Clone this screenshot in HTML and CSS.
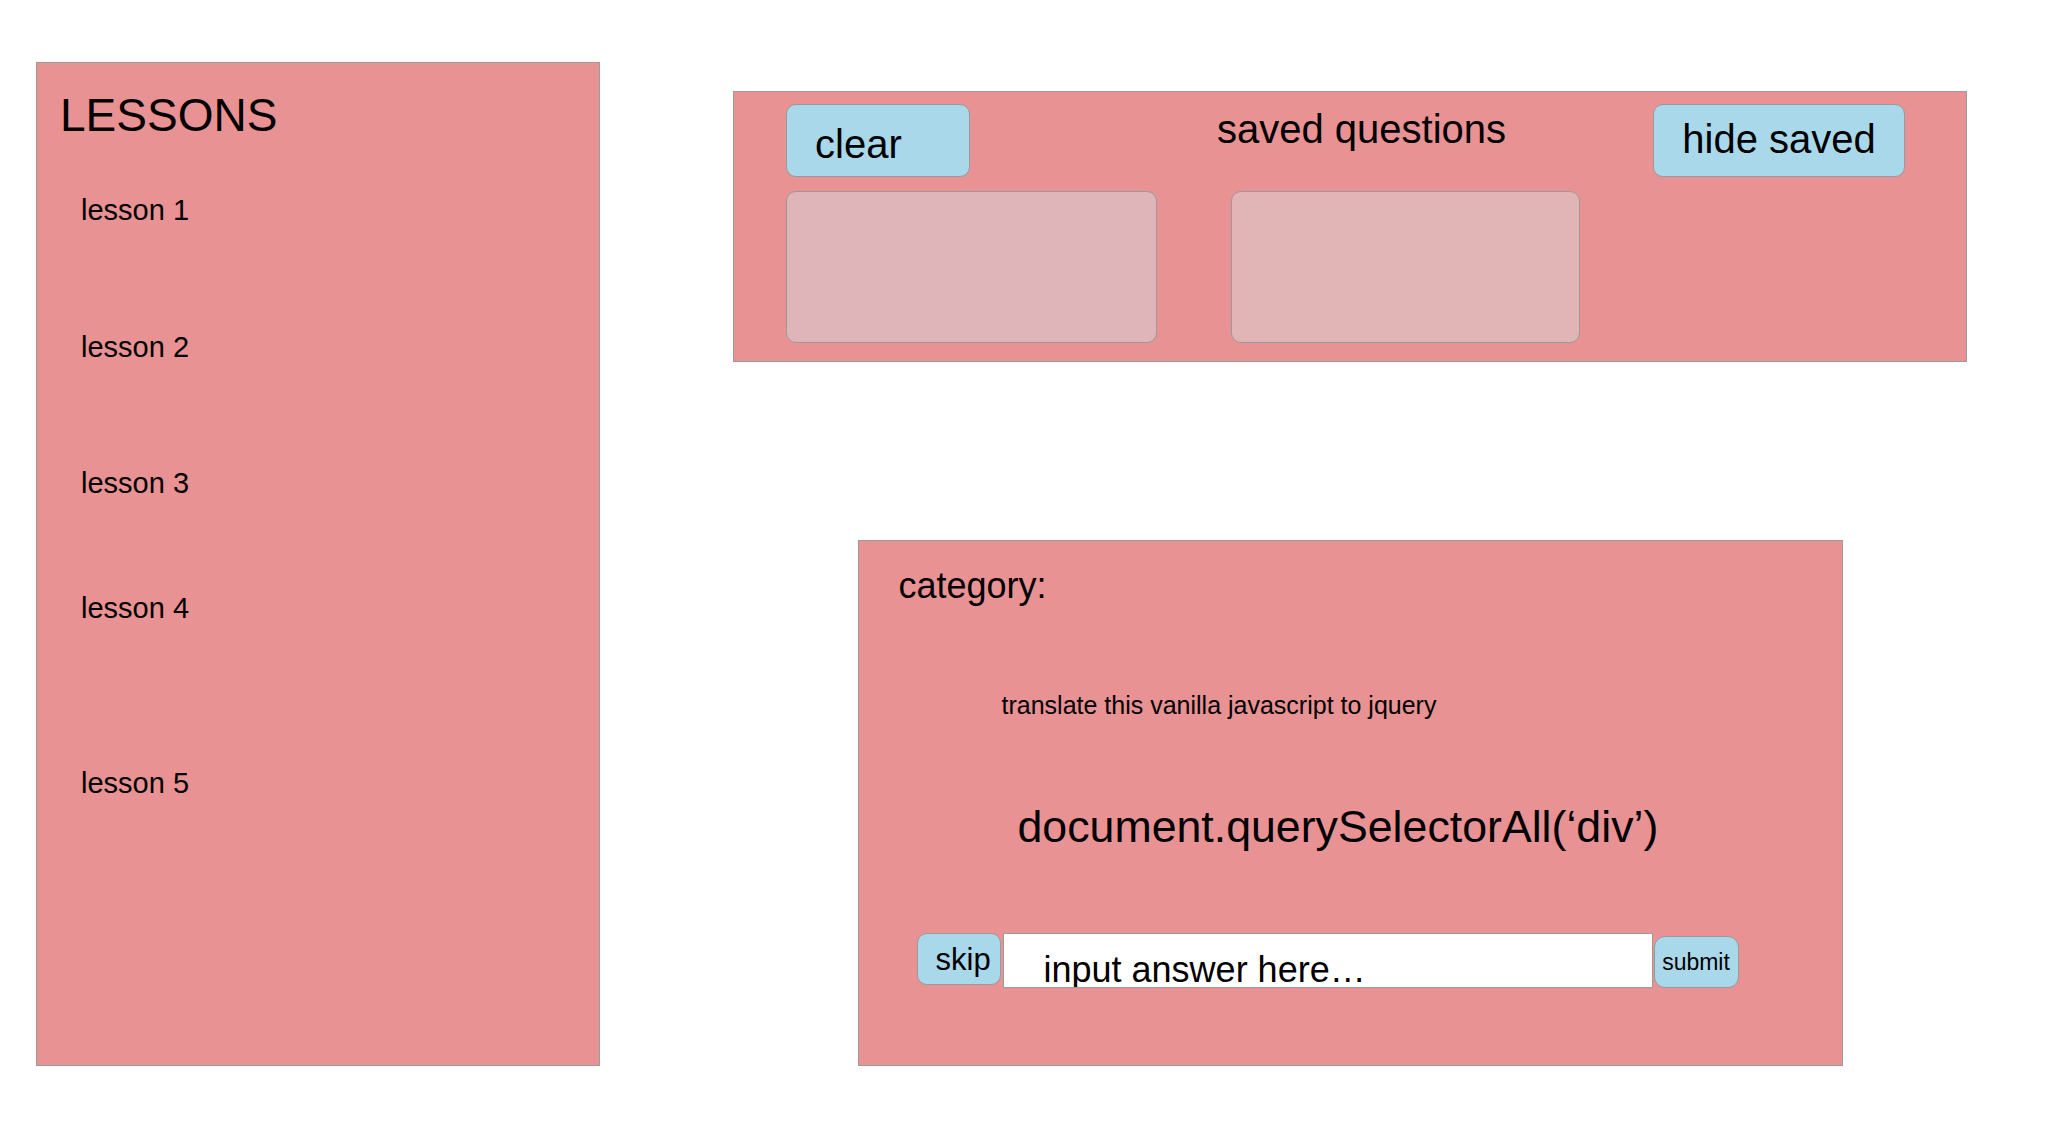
FILE: index.html
```html
<!DOCTYPE html>
<html lang="en">
<head>
<meta charset="utf-8">
<title>Lessons</title>
<link rel="stylesheet" href="styles.css">
</head>
<body>
<div class="page">
  <aside class="lessons">
    <h1 class="lessons-title">LESSONS</h1>
    <ul class="lesson-list">
      <li class="lesson lesson-1">lesson 1</li>
      <li class="lesson lesson-2">lesson 2</li>
      <li class="lesson lesson-3">lesson 3</li>
      <li class="lesson lesson-4">lesson 4</li>
      <li class="lesson lesson-5">lesson 5</li>
    </ul>
  </aside>
  <main class="workspace">
    <section class="saved">
      <div class="saved-head">
        <button type="button" class="btn btn-clear">clear</button>
        <h2 class="saved-title">saved questions</h2>
        <button type="button" class="btn btn-hide">hide saved</button>
      </div>
      <div class="saved-cards">
        <div class="saved-card card-a"></div>
        <div class="saved-card card-b"></div>
      </div>
    </section>
    <section class="quiz">
      <p class="quiz-category">category:</p>
      <p class="quiz-prompt">translate this vanilla javascript to jquery</p>
      <p class="quiz-code">document.querySelectorAll(‘div’)</p>
      <form class="answer-row">
        <button type="button" class="btn btn-skip">skip</button>
        <input class="answer-input" type="text" placeholder="input answer here…">
        <button type="button" class="btn btn-submit">submit</button>
      </form>
    </section>
  </main>
</div>
</body>
</html>
```

FILE: styles.css
```css
html, body {
  margin: 0;
  padding: 0;
  background: #ffffff;
}

body {
  font-family: "Liberation Sans", Arial, Helvetica, sans-serif;
  color: #000000;
}

.page {
  display: flex;
  align-items: flex-start;
  padding: 62px 0 0 36px;
}

/* ---------- lessons sidebar ---------- */
.lessons {
  box-sizing: border-box;
  width: 564px;
  height: 1004px;
  background: #e89294;
  border: 1px solid #9c9c9c;
  padding: 29px 0 0 23px;
}

.lessons-title {
  margin: 0;
  font-size: 46px;
  line-height: 46px;
  font-weight: normal;
}

.lesson-list {
  list-style: none;
  margin: 0;
  padding: 0 0 0 21px;
}

.lesson {
  font-size: 29px;
  line-height: 29px;
}

.lesson-1 { margin-top: 58px; }
.lesson-2 { margin-top: 107.5px; }
.lesson-3 { margin-top: 107.5px; }
.lesson-4 { margin-top: 96px; }
.lesson-5 { margin-top: 146px; }

/* ---------- workspace ---------- */
.workspace {
  margin-left: 133px;
  width: 1234px;
  display: flex;
  flex-direction: column;
  align-items: center;
}

.btn {
  display: block;
  box-sizing: border-box;
  margin: 0;
  font-family: inherit;
  color: #000000;
  background: #a9d8eb;
  border: 1px solid #9a9a9a;
  border-radius: 10px;
  cursor: pointer;
}

/* saved questions panel */
.saved {
  box-sizing: border-box;
  width: 1234px;
  height: 271px;
  margin-top: 29px;
  background: #e89294;
  border: 1px solid #9c9c9c;
  padding: 12px 61px 0 52px;
}

.saved-head {
  display: flex;
  align-items: flex-start;
}

.btn-clear {
  width: 184px;
  padding: 19px 0 12px 28px;
  font-size: 40px;
  line-height: 40px;
  text-align: left;
}

.saved-title {
  margin: 5px 0 0 247px;
  font-size: 40px;
  line-height: 40px;
  font-weight: normal;
}

.btn-hide {
  margin-left: auto;
  width: 252px;
  padding: 14px 0 17px 0;
  font-size: 40px;
  line-height: 40px;
  text-align: center;
}

.saved-cards {
  display: flex;
  gap: 74px;
  margin-top: 14px;
}

.saved-card {
  box-sizing: border-box;
  height: 152px;
  border: 1px solid #9a9a9a;
  border-radius: 10px;
}

.card-a {
  width: 371px;
  background: #e0b5b9;
}

.card-b {
  width: 349px;
  background: #e1b4b5;
}

/* quiz panel */
.quiz {
  box-sizing: border-box;
  width: 985px;
  height: 526px;
  margin-top: 178px;
  background: #e89294;
  border: 1px solid #9c9c9c;
  padding: 27px 0 0 40px;
}

.quiz-category {
  margin: 0;
  font-size: 36px;
  line-height: 36px;
}

.quiz-prompt {
  margin: 89px 0 0 103px;
  font-size: 25px;
  line-height: 25px;
}

.quiz-code {
  margin: 87px 0 0 119px;
  font-size: 44.7px;
  line-height: 44px;
}

.answer-row {
  display: flex;
  align-items: flex-start;
  margin: 84px 0 0 18px;
}

.btn-skip {
  width: 84px;
  padding: 10px 0 9px 18px;
  font-size: 31px;
  line-height: 31px;
  text-align: left;
}

.answer-input {
  box-sizing: border-box;
  width: 650px;
  height: 55px;
  margin: 0 0 0 2px;
  padding: 18px 0 0 40px;
  font-family: inherit;
  font-size: 36px;
  line-height: 36px;
  color: #000000;
  background: #ffffff;
  border: 1px solid #9a9a9a;
  border-radius: 0;
  outline: none;
}

.answer-input::placeholder {
  color: #000000;
  opacity: 1;
}

.btn-submit {
  width: 85px;
  margin: 3px 0 0 1px;
  padding: 14px 0 13px 0;
  font-size: 23px;
  line-height: 23px;
  text-align: center;
  border-radius: 11px;
}
```
